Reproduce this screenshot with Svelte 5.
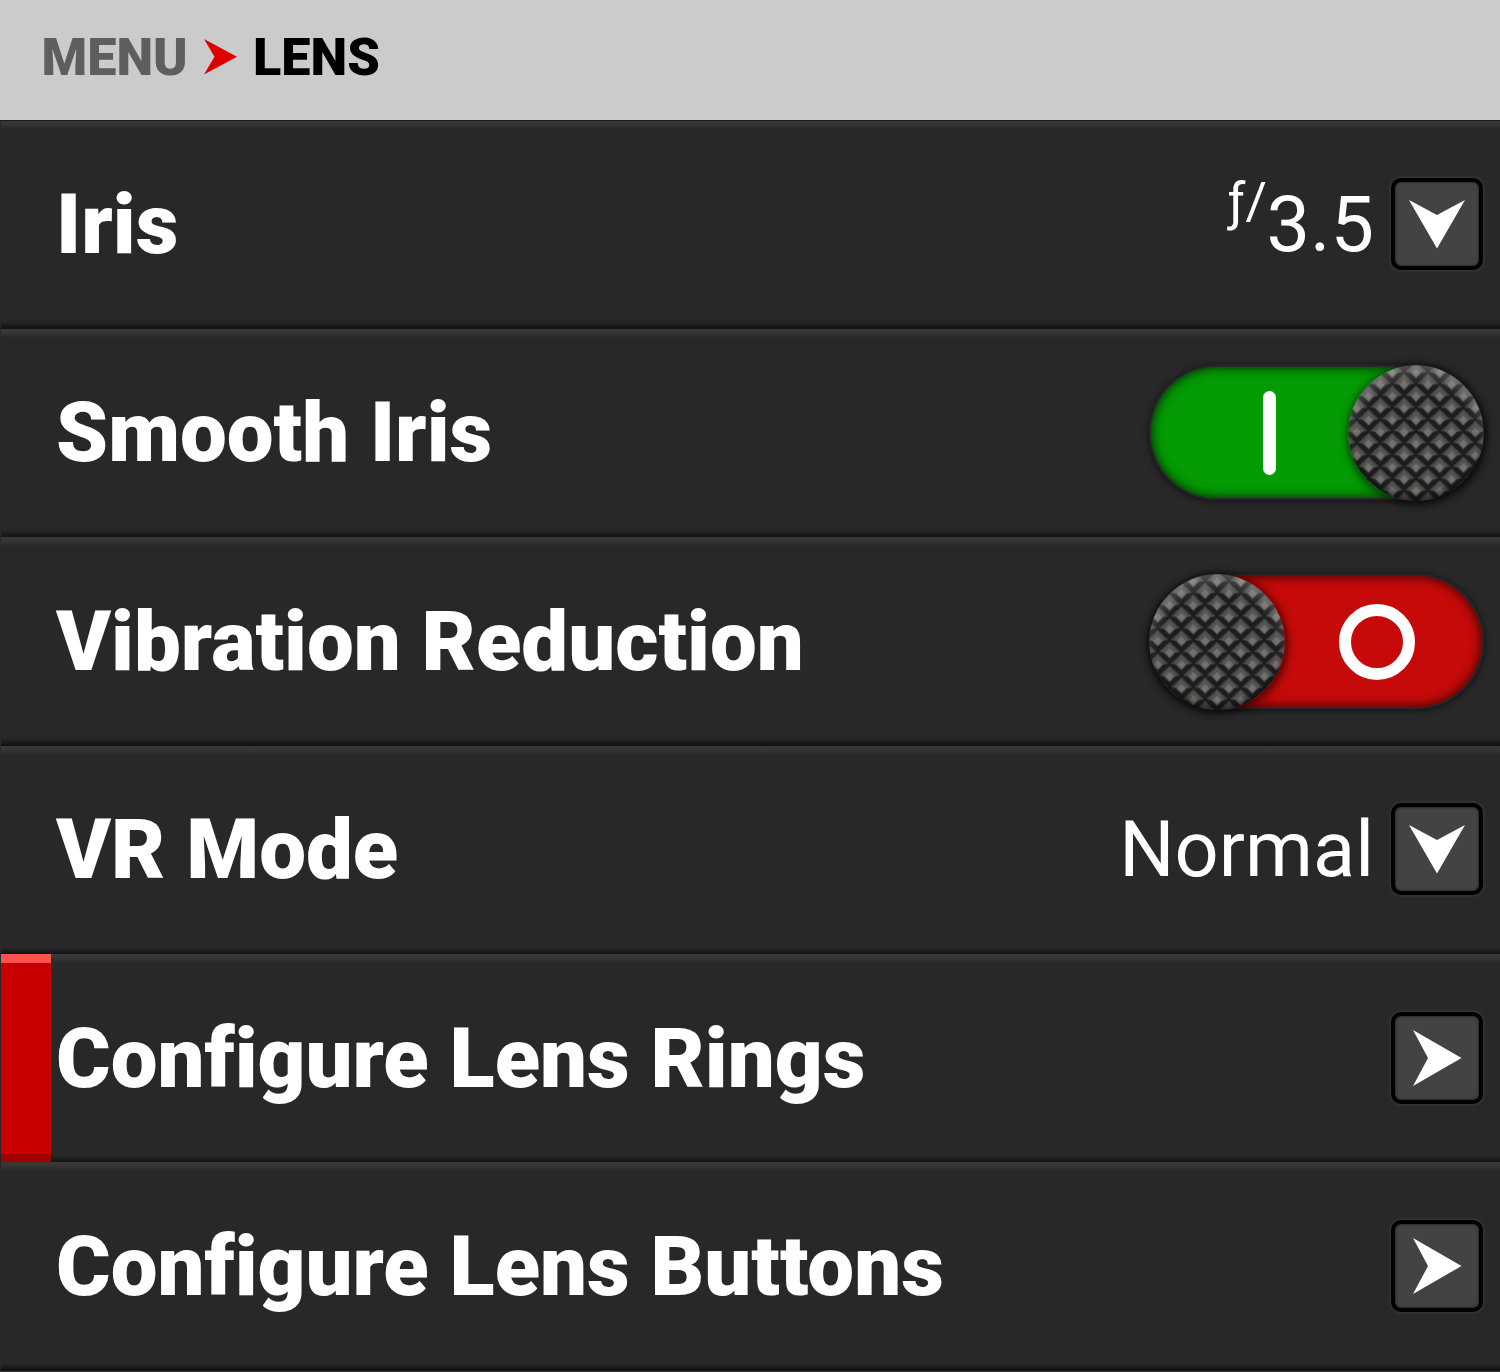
<script>
    let selected = $state("rings");

    let items = $state([
        { id: "iris", label: "Iris", type: "select", prefix: "ƒ/", value: "3.5" },
        { id: "smooth", label: "Smooth Iris", type: "toggle", on: true },
        { id: "vr", label: "Vibration Reduction", type: "toggle", on: false },
        { id: "vrmode", label: "VR Mode", type: "select", value: "Normal" },
        { id: "rings", label: "Configure Lens Rings", type: "link" },
        { id: "buttons", label: "Configure Lens Buttons", type: "link" },
    ]);

    function toggle(item) {
        item.on = !item.on;
    }
</script>

<header>
    <span class="parent">MENU</span>
    <svg class="crumb" viewBox="0 0 33 36" width="33" height="36">
        <path d="M0 0L33 17.8L0 35.5L10.5 17.8Z" fill="#dc0000" />
    </svg>
    <span class="current">LENS</span>
</header>

<main>
    {#each items as item (item.id)}
        <div class="row" class:selected={item.id === selected}>
            <span class="label">{item.label}</span>

            {#if item.type === "toggle"}
                <button
                    class="toggle"
                    class:on={item.on}
                    aria-label={item.label}
                    onclick={() => toggle(item)}
                >
                    <span class="mark"></span>
                    <svg class="knob" viewBox="-68 -68 136 136" width="136" height="136">
                        <defs>
                            <g id="stud-{item.id}">
                                <path d="M0 -12L10.5 -2L5 -1L0 4.5L-5 -1L-10.5 -2Z" fill="#454545" />
                                <path d="M0 -10L7 -2.5L0 4.5L-7 -2.5Z" fill="#555453" />
                                <path d="M0 -5.5L4 -1.2L0 3.2L-4 -1.2Z" fill="#75706b" />
                            </g>
                            <pattern
                                id="grip-{item.id}"
                                x="-11.85"
                                y="0"
                                width="23.7"
                                height="23.7"
                                patternUnits="userSpaceOnUse"
                            >
                                <rect width="24" height="24" fill="#1d1d1d" />
                                <use href="#stud-{item.id}" x="11.85" y="11.85" />
                                <use href="#stud-{item.id}" x="0" y="0" />
                                <use href="#stud-{item.id}" x="23.7" y="0" />
                                <use href="#stud-{item.id}" x="0" y="23.7" />
                                <use href="#stud-{item.id}" x="23.7" y="23.7" />
                            </pattern>
                            <radialGradient id="shine-{item.id}" gradientUnits="userSpaceOnUse" cx="0" cy="12" r="80">
                                <stop offset="0.76" stop-color="#fff" stop-opacity="0" />
                                <stop offset="1" stop-color="#fff" stop-opacity="0.22" />
                            </radialGradient>
                            <radialGradient id="shade-{item.id}" gradientUnits="userSpaceOnUse" cx="0" cy="-7" r="75">
                                <stop offset="0.88" stop-color="#000" stop-opacity="0" />
                                <stop offset="1" stop-color="#000" stop-opacity="0.5" />
                            </radialGradient>
                        </defs>
                        <circle r="67.7" fill="url(#grip-{item.id})" />
                        <circle r="67.7" fill="url(#shine-{item.id})" />
                        <circle r="67.7" fill="url(#shade-{item.id})" />
                    </svg>
                </button>
            {:else}
                {#if item.value}
                    <span class="value">
                        {#if item.prefix}<span class="prefix">{item.prefix}</span>{/if}{item.value}
                    </span>
                {/if}
                <button class="box" aria-label="Open {item.label}">
                    <svg class:down={item.type === "select"} viewBox="-28 -28 56 56" width="56" height="56">
                        <path d="M-24 -28L24.5 0L-24 28L-9 0Z" fill="#fff" />
                    </svg>
                </button>
            {/if}
        </div>
    {/each}
    <div class="row next"></div>
</main>

<style>
    :global(body) {
        background: #282828;
        font-family: Roboto, "Liberation Sans", sans-serif;
    }

    :global(#app) {
        height: 1372px;
        overflow: hidden;
    }

    header {
        height: 120.4px;
        padding: 0 0 5.8px 41.5px;
        box-sizing: border-box;
        background: #cbcbcb;
        display: flex;
        align-items: center;
        font-size: 52.2px;
        font-weight: 900;
    }

    .parent {
        width: 162.5px;
        color: #5e5e5e;
    }

    .crumb {
        margin-right: 16px;
    }

    .current {
        color: #000;
    }

    main {
        padding-left: 1px;
    }

    .row {
        height: 208.4px;
        box-sizing: border-box;
        padding: 0 17px 0 55px;
        display: flex;
        align-items: center;
        background: linear-gradient(
            to bottom,
            #393939 0,
            #353535 4px,
            #282828 9px,
            #282828 200px,
            #202020 204px,
            #111 208.4px
        );
        color: #fff;
    }

    .row:first-child {
        box-shadow: inset 0 1px #1c1c1c;
    }

    .selected {
        padding-left: 0;
    }

    .selected::before {
        content: "";
        width: 50px;
        height: 100%;
        margin-right: 5px;
        background: linear-gradient(
            to bottom,
            #ff5050 0,
            #ff5050 9px,
            #c80000 9px,
            #c80000 200px,
            #a00000 200px
        );
    }

    .label {
        flex: 1;
        font-size: 83.3px;
        font-weight: 900;
        font-variant-ligatures: none;
        white-space: nowrap;
    }

    .value {
        font-size: 77.5px;
        font-weight: 400;
        margin-right: 17px;
        white-space: nowrap;
    }

    .prefix {
        font-size: 52px;
        margin-right: -0.5px;
        position: relative;
        top: -32px;
    }

    .box {
        width: 92px;
        height: 92px;
        margin-bottom: 1px;
        padding: 0;
        box-sizing: border-box;
        border: 4px solid #000;
        border-radius: 10px;
        background: #434343;
        box-shadow:
            0 0 2px 2px #323232,
            inset 0 0 2px 1px #2c2c2c;
        display: flex;
        align-items: center;
        justify-content: center;
    }

    .down {
        transform: rotate(90deg);
    }

    .toggle {
        position: relative;
        width: 331px;
        height: 131px;
        margin-right: 1px;
        padding: 0;
        border: none;
        border-radius: 66px;
        background: #c60a0a;
        box-shadow:
            inset 0 0 11px 1px rgba(0, 0, 0, 0.7),
            0 0 0 2px #29272a,
            0 1px 6px 3px rgba(0, 0, 0, 0.5);
    }

    .toggle.on {
        background: #049b04;
    }

    .knob {
        position: absolute;
        top: -2px;
        left: -2px;
        border-radius: 50%;
        box-shadow: 1px 2px 8px 2px rgba(0, 0, 0, 0.6);
    }

    .on .knob {
        left: 197px;
    }

    .mark {
        position: absolute;
        top: 28px;
        left: 188px;
        width: 76px;
        height: 76px;
        box-sizing: border-box;
        border: 12.5px solid #fff;
        border-radius: 50%;
    }

    .on .mark {
        top: 24px;
        left: 112px;
        width: 13px;
        height: 84px;
        border: none;
        border-radius: 7px;
        background: #fff;
    }

    .next {
        padding: 0;
    }
</style>
